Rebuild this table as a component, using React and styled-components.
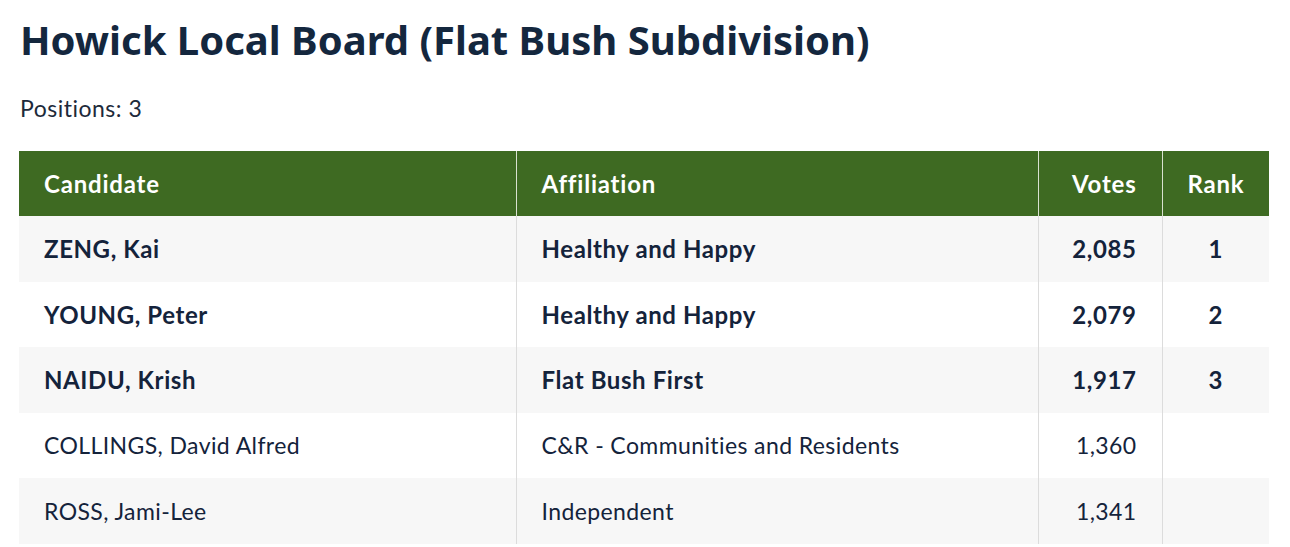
import React from 'react';
import styled, { createGlobalStyle } from 'styled-components';

const GlobalStyle = createGlobalStyle`
  body {
    margin: 0;
    background: #fff;
    font-family: "Lato", "Noto Sans", sans-serif;
    color: #14233b;
  }
`;

const Page = styled.main`
  padding: 16px 21px 0 19px;
`;

const Title = styled.h1`
  margin: 0 0 0 1px;
  font-family: "Noto Sans", sans-serif;
  font-size: 40px;
  font-weight: 700;
  line-height: 48px;
  color: #14273e;
`;

const Positions = styled.p`
  margin: 31px 0 30px 1px;
  font-size: 23px;
  letter-spacing: 0.5px;
  line-height: 26px;
  color: #1d2a3a;
`;

const Table = styled.table`
  width: 1250px;
  border-collapse: collapse;
  table-layout: fixed;
`;

const HeadCell = styled.th`
  height: 65px;
  padding: 0 25px;
  background: #3e6a22;
  color: #fff;
  font-size: 24px;
  letter-spacing: 0.8px;
  font-weight: 700;
  text-align: ${p => p.$align || 'left'};
  border-left: ${p => (p.$first ? 'none' : '1px solid #d9e2d0')};
`;

const Row = styled.tr`
  background: ${p => (p.$shaded ? '#f7f7f7' : '#fff')};
`;

const Cell = styled.td`
  height: 65.5px;
  padding: 0 25px;
  font-size: ${p => (p.$elected ? '24px' : '23px')};
  letter-spacing: ${p => (p.$elected ? '0.6px' : '0.4px')};
  font-weight: ${p => (p.$elected ? 700 : 400)};
  text-align: ${p => p.$align || 'left'};
  border-left: ${p => (p.$first ? 'none' : '1px solid #dcdcdc')};
  color: #14233b;
`;

const candidates = [
  { name: 'ZENG, Kai', aff: 'Healthy and Happy', votes: '2,085', rank: '1' },
  { name: 'YOUNG, Peter', aff: 'Healthy and Happy', votes: '2,079', rank: '2' },
  { name: 'NAIDU, Krish', aff: 'Flat Bush First', votes: '1,917', rank: '3' },
  { name: 'COLLINGS, David Alfred', aff: 'C&R - Communities and Residents', votes: '1,360', rank: '' },
  { name: 'ROSS, Jami-Lee', aff: 'Independent', votes: '1,341', rank: '' },
];

const App = () => {
  return (
    <Page>
      <GlobalStyle />
      <Title>Howick Local Board (Flat Bush Subdivision)</Title>
      <Positions>Positions: 3</Positions>
      <Table>
        <colgroup>
          <col style={{ width: 497 }} />
          <col style={{ width: 522 }} />
          <col style={{ width: 124 }} />
          <col style={{ width: 107 }} />
        </colgroup>
        <thead>
          <tr>
            <HeadCell $first>Candidate</HeadCell>
            <HeadCell>Affiliation</HeadCell>
            <HeadCell $align="right">Votes</HeadCell>
            <HeadCell $align="center">Rank</HeadCell>
          </tr>
        </thead>
        <tbody>
          {candidates.map((c, i) => {
            const elected = c.rank !== '';
            return (
              <Row key={c.name} $shaded={i % 2 === 0}>
                <Cell $first $elected={elected}>{c.name}</Cell>
                <Cell $elected={elected}>{c.aff}</Cell>
                <Cell $align="right" $elected={elected}>{c.votes}</Cell>
                <Cell $align="center" $elected={elected}>{c.rank}</Cell>
              </Row>
            );
          })}
        </tbody>
      </Table>
    </Page>
  );
};

export default App;
